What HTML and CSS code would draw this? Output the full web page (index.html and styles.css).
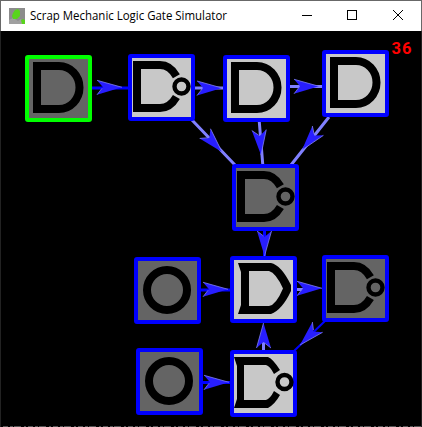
FILE: index.html
```html
<!DOCTYPE html>
<html lang="en">
<head>
<meta charset="utf-8">
<title>Scrap Mechanic Logic Gate Simulator</title>
<link rel="stylesheet" href="styles.css">
</head>
<body>
<div class="window">
  <header class="titlebar">
    <svg class="app-icon" width="16" height="16" viewBox="0 0 16 16">
      <rect width="16" height="16" fill="#8c8c8c"/>
      <path d="M0 12L4 10 9 13 12 11 14 16H0z" fill="#a0a0a0"/>
      <path d="M6 2L9 1 11 3 11 8 8 11 4 11 3 8 4 5z" fill="#58d41c"/>
      <path d="M12 12L14 11 16 12V16H13z" fill="#58d41c"/>
    </svg>
    <svg class="title" width="210" height="30"><text x="0" y="19" textLength="197" lengthAdjust="spacingAndGlyphs">Scrap Mechanic Logic Gate Simulator</text></svg>
    <svg class="controls" width="140" height="30" viewBox="0 0 140 30" shape-rendering="crispEdges">
      <path d="M21 14.5h10"/>
      <rect x="66.5" y="9.5" width="9" height="9"/>
      <path shape-rendering="auto" d="M112 9l10 10M122 9l-10 10"/>
    </svg>
  </header>
  <svg class="board" width="422" height="396" viewBox="0 31 422 396">
    <defs>
      <g id="arrow">
        <path class="head" d="M0 0L-25 -7 -19 0 -25 7.5z"/>
        <path class="glint" d="M0 0L-25 -7M-25 7.5L-20 1"/>
      </g>
      <g id="and"><path class="ink" d="M12 11H34A20.5 21.5 0 0 1 34 54H12z"/></g>
      <g id="nand">
        <path class="ink" d="M48.4 22.2Q42 11 32 11H9V54H32Q42 54 48.4 43"/>
        <circle class="ring" cx="53.5" cy="32.5" r="7"/>
      </g>
      <g id="or"><path class="shape" fill-rule="evenodd" d="M8 7H41Q51 9 61 29V35Q52 54 41 58H8L11 49V16zM19 15V50H39Q46 49 53 32.5Q46 17 39 15z"/></g>
      <g id="nor">
        <path class="shape" d="M4 7H38Q43 9 50 20L44 24Q40 16 36 15H14V50H36Q40 49 44 41L50 45Q45 54 38 58H4L7 49V16z"/>
        <circle class="ring" cx="54.5" cy="32" r="7"/>
      </g>
      <g id="knob"><circle class="knob" cx="33" cy="33" r="20"/></g>
      <rect id="tile" x="2" y="2" width="63" height="63" rx="1"/>
    </defs>

    <g class="wire idle">
      <path d="M92 88H128M264.5 231V256M201 290H231M203 382.5H231"/>
      <path class="thin" d="M326 320L294 351"/>
    </g>
    <g class="wire live">
      <path d="M195 88H223M290 86.5H323M192 120L235 165M259.3 122L262.8 165M329 117L291 165M297 289.5H312M263.5 336V351"/>
    </g>
    <use href="#arrow" transform="translate(122 87.3)"/>
    <use href="#arrow" transform="translate(222 88)"/>
    <use href="#arrow" transform="translate(319 86.3)"/>
    <use href="#arrow" transform="translate(222 152) rotate(48)"/>
    <use href="#arrow" transform="translate(261 155) rotate(86)"/>
    <use href="#arrow" transform="translate(302 150) rotate(130)"/>
    <use href="#arrow" transform="translate(264.5 256) rotate(90)"/>
    <use href="#arrow" transform="translate(228 289.3)"/>
    <use href="#arrow" transform="translate(322 288.3)"/>
    <use href="#arrow" transform="translate(300 345) rotate(135)"/>
    <use href="#arrow" transform="translate(263.5 323) rotate(-90)"/>
    <use href="#arrow" transform="translate(229 382.3)"/>

    <g transform="translate(25 55)"><use href="#tile" class="off selected"/><use href="#and"/></g>
    <g transform="translate(128 54)"><use href="#tile" class="on"/><use href="#nand"/></g>
    <g transform="translate(223 55)"><use href="#tile" class="on"/><use href="#and"/></g>
    <g transform="translate(322 50)"><use href="#tile" class="on"/><use href="#and"/></g>
    <g transform="translate(232 164)"><use href="#tile" class="off"/><use href="#nand"/></g>
    <g transform="translate(134 257)"><use href="#tile" class="off"/><use href="#knob"/></g>
    <g transform="translate(230 256)"><use href="#tile" class="on"/><use href="#or"/></g>
    <g transform="translate(322 255)"><use href="#tile" class="off"/><use href="#nand"/></g>
    <g transform="translate(136 348)"><use href="#tile" class="off"/><use href="#knob"/></g>
    <g transform="translate(230 350)"><use href="#tile" class="on"/><use href="#nor"/></g>

    <text class="fps" x="391.5" y="54" textLength="20">36</text>
    <path class="edge" d="M.5 31V427M421.5 31V427"/>
    <path class="floor" d="M3 426.5H422"/>
  </svg>
</div>
</body>
</html>
```

FILE: styles.css
```css
body {
  margin: 0;
  background: #000;
}

.window {
  width: 422px;
  height: 427px;
  overflow: hidden;
}

.titlebar {
  display: flex;
  align-items: center;
  box-sizing: border-box;
  height: 31px;
  padding-left: 8px;
  border: solid #686868;
  border-width: 1px 1px 0;
  background: #fff;
}

.app-icon {
  margin-right: 5px;
}

.title {
  font: 12px "Open Sans", "Noto Sans", sans-serif;
}

.controls {
  margin-left: auto;
  fill: none;
  stroke: #000;
  stroke-width: 1;
}

.board {
  display: block;
  background: #000;
}

.wire {
  fill: none;
  stroke-width: 3;
}

.idle { stroke: #0000ff; }
.live { stroke: #8080ff; }
.thin { stroke-width: 2; }

.head { fill: #281eff; }

.glint {
  fill: none;
  stroke: #8080f0;
  stroke-width: .8;
}

.on,
.off {
  stroke: #0000ff;
  stroke-width: 4;
}

.on { fill: #c8c8c8; }
.off { fill: #646464; }
.selected { stroke: #00ff00; }

.ink {
  fill: none;
  stroke: #000;
  stroke-width: 8;
}

.shape { fill: #000; }

.ring {
  fill: none;
  stroke: #000;
  stroke-width: 4.4;
}

.knob {
  fill: none;
  stroke: #000;
  stroke-width: 8;
}

.fps {
  fill: #ff0000;
  font: bold 16.5px Roboto, "Liberation Sans", sans-serif;
}

.edge {
  stroke: #222;
}

.floor {
  stroke: #555;
  stroke-dasharray: 5 2 3 1 7 3 2 2;
}
```
